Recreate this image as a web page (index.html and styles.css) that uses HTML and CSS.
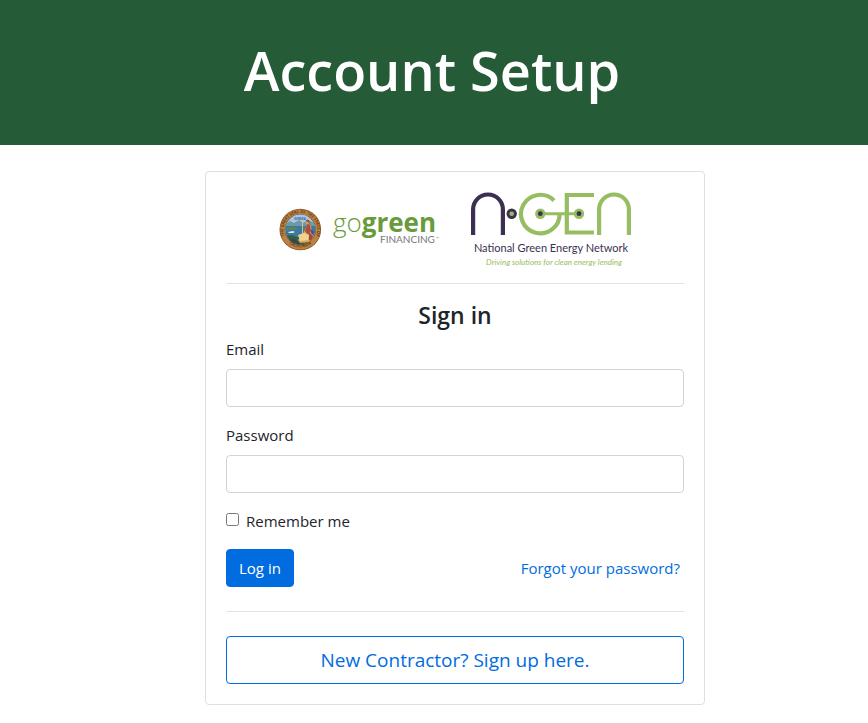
FILE: index.html
```
<!DOCTYPE html>
<html lang="en">
<head>
  <meta charset="UTF-8">
  <meta name="viewport" content="width=device-width, initial-scale=1.0">
  <title>Account Setup</title>
  <link rel="stylesheet" href="styles.css">
</head>
<body>
  <header class="banner">
    <h1>Account Setup</h1>
  </header>

  <main class="page">
    <div class="card">
      <!-- Partner logos -->
      <div class="logos">
        <svg class="logo-gogreen" viewBox="0 0 161 75" role="img" aria-label="State of California, GoGreen Financing">
          <defs>
            <clipPath id="scene"><circle cx="21.3" cy="37.5" r="15"/></clipPath>
            <path id="sealTop" d="M7.6 48A17 17 0 1 1 35 48"/>
            <path id="sealBottom" d="M7.5 49.5A19 19 0 0 0 35.1 49.5"/>
          </defs>
          <circle cx="21.3" cy="37.5" r="20.8" fill="#8a5a2c"/>
          <circle cx="21.3" cy="37.5" r="20" fill="#bd8040"/>
          <circle cx="21.3" cy="37.5" r="15.5" fill="#76502c"/>
          <g clip-path="url(#scene)">
            <rect x="6" y="22" width="31" height="31" fill="#a9c8e2"/>
            <path d="M6 32l5-3 4 2 5-3 4 3 5-3 8 4v5H6z" fill="#7198a6"/>
            <path d="M6 34h31v12H6z" fill="#3c79a2"/>
            <path d="M6 36l8-1 5 1-4 2H6z" fill="#5f8557"/>
            <path d="M9 40l5-1 2 1-2 1h-4z" fill="#dce8ef"/>
            <path d="M6 44l6-1 6 2 7-1 12 2v8H6z" fill="#355d46"/>
            <path d="M6 48l9-1 6 4v2H6z" fill="#32494b"/>
            <path d="M23.5 29v15" stroke="#d9c184" stroke-width="1"/>
            <path d="M28 32l4 2 1 5 2 7-5 4-9 1-2-3 3-4 3-4z" fill="#dfa951"/>
            <path d="M28 32l3 1 1 6-3 4-3-4z" fill="#b04c3d"/>
            <path d="M19 43l6-2 5 2-1 5-8 1z" fill="#efd28c"/>
            <path d="M30 40l4 4-1 5-3-1z" fill="#a9463b"/>
            <path d="M32 37l3 3-1 3-2-2z" fill="#3e549a"/>
            <circle cx="28.5" cy="30" r="2" fill="#d8a070"/>
            <path d="M26.5 29q2-3 4 0l.5 3-2-2z" fill="#8f503a"/>
          </g>
          <text class="seal-motto" x="21" y="28" text-anchor="middle">EUREKA</text>
          <text class="seal-text"><textPath href="#sealTop" startOffset="50%" text-anchor="middle">THE GREAT SEAL OF THE STATE OF</textPath></text>
          <text class="seal-text"><textPath href="#sealBottom" startOffset="50%" text-anchor="middle">CALIFORNIA</textPath></text>
          <text class="gogreen-text" x="54" y="40"><tspan class="go">go</tspan><tspan class="green">green</tspan></text>
          <text class="financing" x="101" y="51">FINANCING</text>
          <text class="tm" x="157" y="48">™</text>
        </svg>

        <svg class="logo-ngen" viewBox="0 0 162 75" role="img" aria-label="N-GEN National Green Energy Network">
          <g fill="none" stroke-width="4.2">
            <path d="M3.1 43V17.4a14.9 14.9 0 0 1 29.8 0V43" stroke="#3b3052"/>
            <g stroke="#97bd62">
              <path d="M84 8.5A19.3 19.3 0 1 0 89.6 21.7"/>
              <path d="M70.3 21.7H109" stroke-width="3"/>
              <path d="M124 3H96.8V40.5H124"/>
              <path d="M129.1 43V17.4a14.9 14.9 0 0 1 29.8 0V43"/>
            </g>
          </g>
          <circle cx="41.7" cy="21.7" r="5.2" fill="#3b3052"/>
          <circle cx="41.7" cy="21.7" r="2.3" fill="#97bd62"/>
          <circle cx="70.3" cy="21.7" r="5.2" fill="#97bd62"/>
          <circle cx="70.3" cy="21.7" r="2.4" fill="#3b3052"/>
          <circle cx="109" cy="21.7" r="5.2" fill="#97bd62"/>
          <circle cx="109" cy="21.7" r="2.4" fill="#3b3052"/>
          <text class="ngen-name" x="81" y="60" text-anchor="middle">National Green Energy Network</text>
          <text class="ngen-tagline" x="84" y="73" text-anchor="middle">Driving solutions for clean energy lending</text>
        </svg>
      </div>

      <hr>

      <form>
        <h2>Sign in</h2>
        <div class="form-group">
          <label for="email">Email</label>
          <input class="form-control" type="email" id="email" name="email">
        </div>
        <div class="form-group">
          <label for="password">Password</label>
          <input class="form-control" type="password" id="password" name="password">
        </div>
        <div class="form-check">
          <input type="checkbox" id="remember" name="remember">
          <label for="remember">Remember me</label>
        </div>
        <div class="form-actions">
          <button class="btn btn-primary" type="submit">Log in</button>
          <a class="forgot" href="#">Forgot your password?</a>
        </div>
      </form>

      <hr class="wide">

      <a class="btn btn-outline" href="#">New Contractor? Sign up here.</a>
    </div>
  </main>
</body>
</html>
```
FILE: styles.css
```
* {
  box-sizing: border-box;
}

body {
  margin: 0;
  font-family: "Segoe UI", "Open Sans", "Noto Sans", sans-serif;
  font-size: 15px;
  line-height: 24px;
  color: #212529;
  background: #fff;
}

.banner {
  padding: 34px 4px 39px 0;
  background: #255c37;
  color: #fff;
  text-align: center;
}

.banner h1 {
  margin: 0;
  font-family: "Open Sans", sans-serif;
  font-size: 54px;
  font-weight: 600;
  line-height: 72px;
}

.page {
  display: flex;
  justify-content: center;
  padding: 26px 0 18px 42px;
}

.card {
  width: 100%;
  max-width: 500px;
  padding: 20px;
  border: 1px solid #dfdfdf;
  border-radius: 4px;
}

.logos {
  display: flex;
  justify-content: center;
  gap: 30px;
}

.logo-gogreen {
  width: 161px;
  height: 75px;
}

.logo-ngen {
  width: 162px;
  height: 75px;
}

.seal-text {
  font-family: "Open Sans", sans-serif;
  font-size: 4px;
  font-weight: 600;
  fill: #49301a;
}

.seal-motto {
  font-family: "Open Sans", sans-serif;
  font-size: 3px;
  font-weight: 700;
  fill: #3f5f96;
}

.gogreen-text {
  font-family: "Open Sans", sans-serif;
  font-size: 26px;
  fill: #699a3b;
}

.go {
  font-weight: 300;
}

.green {
  font-weight: 700;
}

.financing {
  font-family: Lato, sans-serif;
  font-size: 10px;
  fill: #77787b;
}

.tm {
  font-family: Lato, sans-serif;
  font-size: 4px;
  fill: #77787b;
}

.ngen-name {
  font-family: Lato, sans-serif;
  font-size: 11px;
  fill: #3b3052;
}

.ngen-tagline {
  font-family: Lato, sans-serif;
  font-size: 8px;
  font-style: italic;
  fill: #97bd62;
}

hr {
  margin: 16px 0;
  border: 0;
  border-top: 1px solid #e3e3e3;
}

hr.wide {
  margin: 24px 0;
}

h2 {
  margin: 0 0 6px;
  font-size: 23px;
  font-weight: 600;
  line-height: 31px;
  text-align: center;
}

.form-group {
  margin-bottom: 16px;
}

.form-group label {
  display: block;
  margin-bottom: 8px;
}

.form-control {
  display: block;
  width: 100%;
  height: 38px;
  padding: 6px 12px;
  border: 1px solid #ced4da;
  border-radius: 4px;
  font: inherit;
  color: #495057;
}

.form-check {
  display: flex;
  align-items: flex-start;
  gap: 7px;
  margin-bottom: 16px;
}

.form-check input {
  width: 13px;
  height: 13px;
  margin: 4px 0 0;
}

.form-actions {
  display: flex;
  align-items: center;
  justify-content: space-between;
}

.btn {
  border: 1px solid #006ce0;
  border-radius: 4px;
  font: inherit;
  text-align: center;
  text-decoration: none;
  cursor: pointer;
}

.btn-primary {
  padding: 6px 12px;
  background: #006ce0;
  color: #fff;
}

.btn-outline {
  display: block;
  padding: 8px 16px;
  font-size: 19px;
  line-height: 30px;
  color: #006ce0;
}

.forgot {
  margin-right: 4px;
  color: #006ce0;
  text-decoration: none;
}

.forgot:hover {
  text-decoration: underline;
}
```
